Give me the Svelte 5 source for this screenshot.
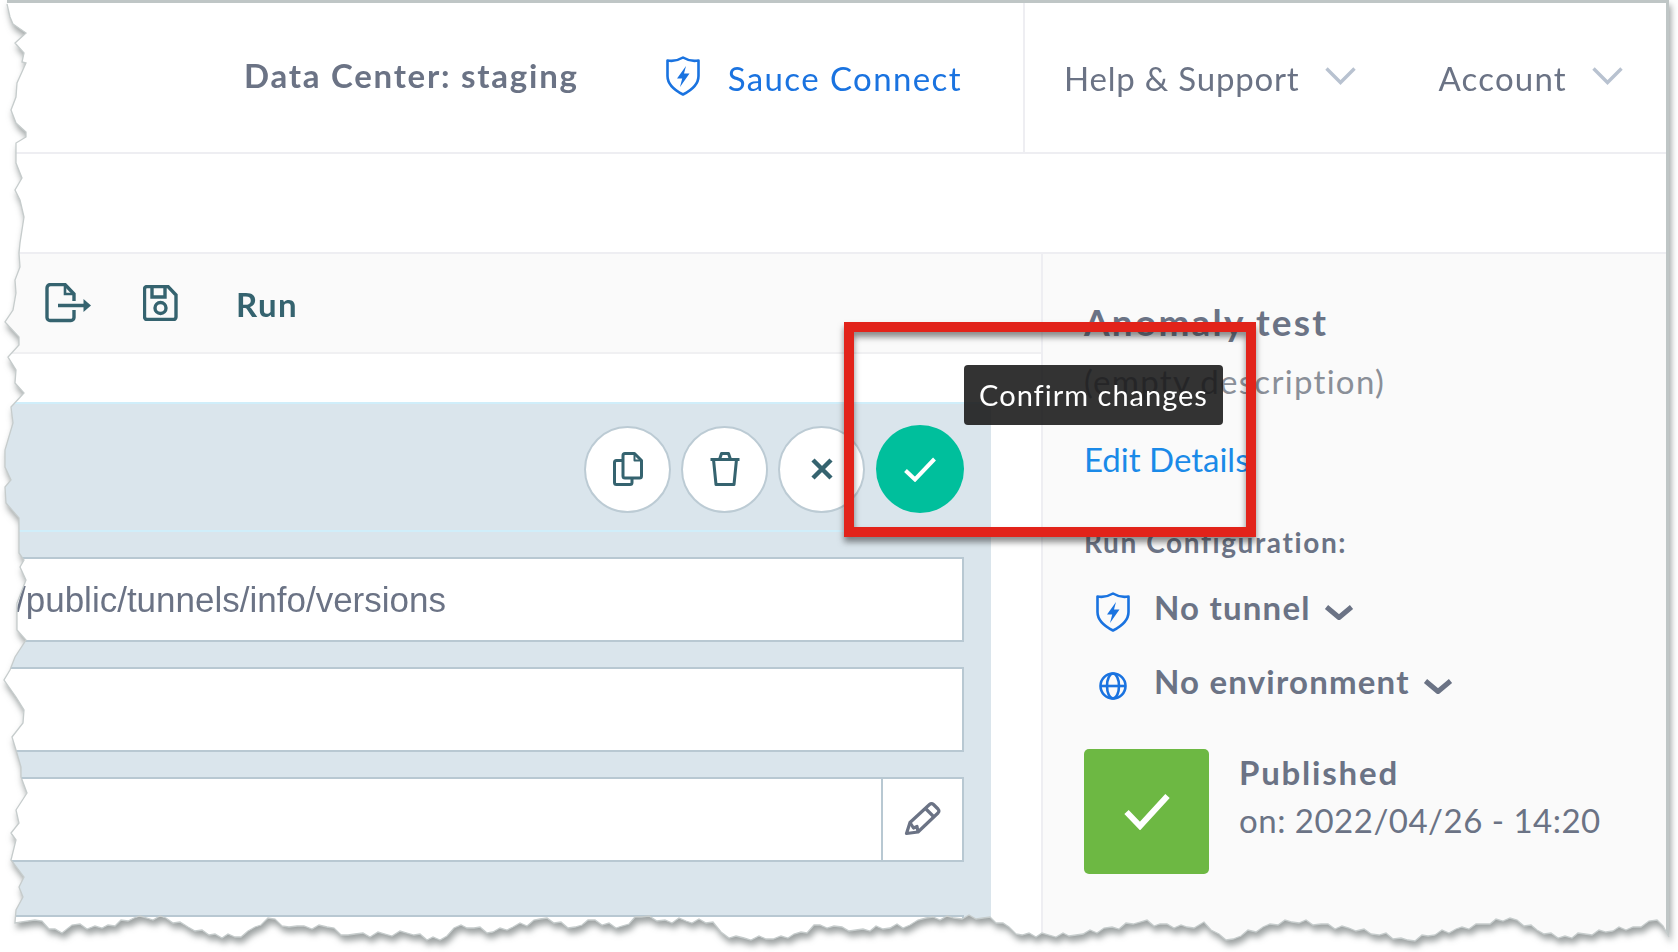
<script>
  // outline of the torn paper edge, traced from the reference
  const leftEdge = [[7,4],[10,17],[13,24],[26,33],[15,43],[24,53],[22,62],[26,63],[17,83],[16,97],[11,110],[16,123],[26,132],[26,137],[16,143],[16,163],[22,178],[15,190],[20,200],[24,217],[20,243],[19,253],[20,267],[15,280],[16,293],[13,310],[5,322],[19,337],[19,345],[8,357],[16,370],[15,383],[24,393],[11,407],[13,423],[5,450],[5,467],[11,480],[5,487],[6,503],[19,518],[19,553],[24,560],[20,567],[26,580],[17,603],[17,630],[26,640],[15,657],[10,670],[4,680],[16,697],[24,710],[23,723],[12,737],[16,750],[21,767],[21,777],[27,793],[16,810],[19,823],[11,833],[16,840],[11,860],[24,877],[19,887],[23,897],[16,910],[15,923]];
  const bottomEdge = [[35,920],[62,933],[72,925],[102,928],[134,918],[166,918],[209,935],[241,937],[268,918],[289,927],[327,927],[348,935],[407,933],[440,940],[461,925],[493,932],[547,918],[568,928],[595,920],[616,928],[641,917],[665,920],[713,922],[729,938],[788,938],[820,925],[856,930],[910,925],[926,918],[990,917],[1022,935],[1076,935],[1140,922],[1194,928],[1204,922],[1226,940],[1285,920],[1349,928],[1408,940],[1510,918],[1558,938],[1633,927],[1657,920],[1669,937]];

  // break long bottom segments into small teeth
  function roughen(points) {
    const out = [];
    for (let i = 0; i < points.length - 1; i++) {
      const [x0, y0] = points[i];
      const [x1, y1] = points[i + 1];
      const steps = Math.max(1, Math.round((x1 - x0) / 7));
      for (let s = 0; s < steps; s++) {
        const t = s / steps;
        const n = s === 0 ? 0 : Math.sin(x0 * 1.7 + s * 2.3) * 2.5;
        out.push([Math.round(x0 + (x1 - x0) * t), Math.round(y0 + (y1 - y0) * t + n)]);
      }
    }
    out.push(points[points.length - 1]);
    return out;
  }

  const edge = [...leftEdge, ...roughen(bottomEdge)];
  const clip = 'polygon(' + ['1669px 0', ...edge.slice().reverse().map(([x, y]) => `${x}px ${y}px`), '7px 0'].join(',') + ')';
  const outline = edge.map(([x, y]) => `${x},${y}`).join(' ');

  const actions = ['copy', 'trash', 'close'];
</script>

{#snippet shield(size)}
  <svg class="shield" width={size} height={size * 40 / 34} viewBox="0 0 34 40" fill="none">
    <path d="M17 1.500C12 4.500 6.500 5.500 1.500 4.500V20C1.500 29 10 35 17 38.500C24 35 32.500 29 32.500 20V4.500C27.500 5.500 22 4.500 17 1.500Z" stroke="#1a73e0" stroke-width="2.600" stroke-linejoin="round"/>
    <path d="M20 10L11 22.500H16.200L14 31L23.500 17.500H18Z" fill="#1a73e0"/>
  </svg>
{/snippet}

{#snippet caret()}
  <svg class="caret" width="30" height="17" viewBox="0 0 30 17" fill="none">
    <path d="M2.500 3L15 13.500L27.500 3" stroke="#6b7385" stroke-width="5" stroke-linejoin="round"/>
  </svg>
{/snippet}

{#snippet thin()}
  <svg class="thin" width="31" height="18" viewBox="0 0 31 18" fill="none">
    <path d="M1.500 1.500L15.500 15.500L29.500 1.500" stroke="#b8c2d0" stroke-width="3.400"/>
  </svg>
{/snippet}

<div class="sheet">
  <div class="paper" style="clip-path:{clip}">
    <header class="top">
      <span class="dc">Data Center: staging</span>
      <a class="connect" href="#top">{@render shield(34)}<span>Sauce Connect</span></a>
      <nav class="menus">
        <span class="menu help"><span>Help &amp; Support</span> {@render thin()}</span>
        <span class="menu acct"><span>Account</span> {@render thin()}</span>
      </nav>
    </header>
    <div class="strip"></div>

    <div class="work">
      <main class="main">
        <div class="toolbar">
          <svg width="46" height="40" viewBox="0 0 46 40" fill="none" stroke="#35636f" stroke-width="3.400">
            <path d="M29 27V34.500A3 3 0 0 1 26 37.500H5A3 3 0 0 1 2 34.500V5A3.500 3.500 0 0 1 5.500 1.500H20L29 11V18"/>
            <path d="M20 1.500V11H29" stroke-width="2.600"/>
            <path d="M13 22.500H40"/>
            <path d="M38.500 16L46 22.500L38.500 29Z" fill="#35636f" stroke="none"/>
          </svg>
          <svg class="save" width="35" height="36" viewBox="0 0 35 36" fill="none" stroke="#35636f" stroke-width="3.400">
            <path d="M4 1.500H25L33 10V32A2.500 2.500 0 0 1 30.500 34.500H4A2.500 2.500 0 0 1 1.500 32V4A2.500 2.500 0 0 1 4 1.500Z"/>
            <path d="M9 1.500V12H22V1.500"/>
            <circle cx="17.500" cy="23" r="5.500"/>
          </svg>
          <span class="run">Run</span>
        </div>
        <div class="gap"></div>

        <section class="editor">
          <div class="editbar">
            {#each actions as a}
              <button class="round" type="button" aria-label={a}>
                {#if a === 'copy'}
                  <svg width="30" height="34" viewBox="0 0 30 34" fill="none" stroke="#35636f" stroke-width="3" stroke-linejoin="round">
                    <path d="M12 1.500H21.500L28.500 8.500V24A2 2 0 0 1 26.500 26H12A2 2 0 0 1 10 24V3.500A2 2 0 0 1 12 1.500Z"/>
                    <path d="M21.500 1.500V8.500H28.500" stroke-width="2"/>
                    <path d="M10 8.500H3.500A2 2 0 0 0 1.500 10.500V30.500A2 2 0 0 0 3.500 32.500H17A2 2 0 0 0 19 30.500V26"/>
                  </svg>
                {:else if a === 'trash'}
                  <svg width="30" height="34" viewBox="0 0 30 34" fill="none" stroke="#35636f" stroke-width="3" stroke-linejoin="round">
                    <path d="M0.500 7.500H29.500"/>
                    <path d="M9.500 7.500L11.500 1.500H18.500L20.500 7.500"/>
                    <path d="M3.500 7.500L6 32.500H24L26.500 7.500"/>
                  </svg>
                {:else}
                  <svg width="22" height="22" viewBox="0 0 22 22" fill="none" stroke="#35636f" stroke-width="4.500">
                    <path d="M2 2L20 20M20 2L2 20"/>
                  </svg>
                {/if}
              </button>
            {/each}
            <button class="round ok" type="button" aria-label="confirm">
              <svg width="32" height="25" viewBox="0 0 32 25" fill="none" stroke="#fff" stroke-width="4">
                <path d="M1.500 13.500L11 22.500L30.500 2"/>
              </svg>
            </button>
          </div>

          <div class="field"><span class="value">/public/tunnels/info/versions</span></div>
          <div class="field"></div>
          <div class="field split">
            <div class="grow"></div>
            <div class="edit">
              <svg width="38" height="35" viewBox="0 0 38 35" fill="none" stroke="#6b7385" stroke-width="3.200" stroke-linejoin="round">
                <path d="M2.500 32.500L6 21.500L25.500 3.500A3 3 0 0 1 29.500 3.500L34 8A3 3 0 0 1 34 12L14 31Z"/>
                <path d="M21.500 7.500L30 16"/>
                <path d="M6 21.500L9.500 27L13 25.500L14 31"/>
              </svg>
            </div>
          </div>
          <div class="field last"></div>
        </section>
      </main>

      <aside class="side">
        <h2>Anomaly test</h2>
        <p class="desc">(empty description)</p>
        <a class="details" href="#top">Edit Details</a>
        <h3>Run Configuration:</h3>
        <div class="pick">
          <span class="pick-icon">{@render shield(34)}</span>
          <span class="pick-name">No tunnel</span>
          {@render caret()}
        </div>
        <div class="pick env">
          <span class="pick-icon">
            <svg width="28" height="28" viewBox="0 0 28 28" fill="none" stroke="#1a73e0" stroke-width="2.600">
              <circle cx="14" cy="14" r="12.500"/>
              <ellipse cx="14" cy="14" rx="6" ry="12.500"/>
              <path d="M1.500 14H26.500"/>
            </svg>
          </span>
          <span class="pick-name">No environment</span>
          {@render caret()}
        </div>
        <div class="status">
          <div class="badge">
            <svg width="46" height="36" viewBox="0 0 46 36" fill="none" stroke="#fff" stroke-width="6">
              <path d="M2.500 18L16 32L43.500 2"/>
            </svg>
          </div>
          <div class="status-text">
            <strong>Published</strong>
            <span>on: 2022/04/26 - 14:20</span>
          </div>
        </div>
      </aside>
    </div>

    <div class="tip">Confirm changes</div>
    <div class="callout"></div>
  </div>

  <svg class="edge" width="1678" height="952" viewBox="0 0 1678 952" fill="none">
    <polyline points={outline} stroke="#c6cccc" stroke-width="1.300"/>
  </svg>
</div>

<style>
  :global(body) { margin: 0; background: #fff; }

  .sheet {
    position: relative; width: 1678px; height: 952px; overflow: hidden;
    font-family: Lato, "Open Sans", sans-serif;
    color: #6b7385;
    filter: drop-shadow(2px 5px 3px rgba(60, 70, 70, 0.5));
  }
  .edge { position: absolute; left: 0; top: 0; pointer-events: none; }

  .paper {
    position: relative; box-sizing: border-box; width: 1669px; height: 945px;
    background: #fff; overflow: hidden;
    border-top: 3px solid #bfc6c6; border-right: 3px solid #bfc6c6;
  }

  .top {
    display: flex; align-items: center; height: 151px; box-sizing: border-box;
    border-bottom: 2px solid #eeeef2; padding-left: 244px;
  }
  .dc { font-size: 33px; font-weight: 700; color: #6b7385; margin-top: -6px; letter-spacing: 1.75px; }
  .connect {
    display: flex; align-items: center; margin-left: 87px; gap: 28px;
    font-size: 33px; letter-spacing: 1.4px; color: #1a73e0; text-decoration: none;
  }
  .connect .shield { margin-top: -4px; }
  .menus {
    display: flex; align-items: center; align-self: stretch;
    margin-left: 61px; padding-left: 39px; border-left: 2px solid #eeeef2;
  }
  .menu { display: flex; align-items: center; gap: 25px; font-size: 33px; font-weight: 400; letter-spacing: 0.8px; }
  .help { margin-right: 83px; }
  .acct { letter-spacing: 1.2px; }
  .thin { margin-top: -4px; }

  .strip { height: 98px; border-bottom: 2px solid #eeeef2; }

  .work { display: flex; height: 700px; }
  .main { width: 1041px; }

  .toolbar {
    display: flex; align-items: center; box-sizing: border-box; height: 100px;
    padding: 0 0 0 45px; background: #fafafa; border-bottom: 2px solid #f0f0f2;
  }
  .save { margin-left: 52px; }
  .run { margin-left: 58px; font-size: 33px; font-weight: 700; letter-spacing: 1.4px; color: #35636f; margin-top: 2px; }
  .gap { height: 48px; }

  .editor { width: 991px; height: 560px; background: #dae5ec; border-top: 2px solid #d0eefa; box-sizing: border-box; }
  .editbar {
    display: flex; align-items: center; justify-content: flex-end; gap: 10px;
    box-sizing: border-box; height: 128px; padding: 4px 27px 0 0;
    border-bottom: 2px solid #d0eefa; margin-bottom: 25px;
  }
  .round {
    display: flex; align-items: center; justify-content: center;
    width: 87px; height: 87px; padding: 0; border-radius: 50%;
    background: #fff; border: 2px solid #bccbd4;
  }
  .ok { width: 88px; height: 88px; margin-left: 1px; background: #00bf9c; border: none; }

  .field {
    display: flex; align-items: center; box-sizing: border-box;
    width: 964px; height: 85px; margin-bottom: 25px;
    background: #fff; border: 2px solid #b8c8d2; border-left: none;
  }
  .value {
    margin-left: 16px; font-family: "Liberation Sans", Arial, sans-serif;
    font-size: 35px; color: #6b7385;
  }
  .split .grow { flex: 1; align-self: stretch; }
  .edit {
    display: flex; align-items: center; justify-content: center;
    width: 79px; align-self: stretch; border-left: 2px solid #b8c8d2;
  }
  .edit svg { margin-top: -2px; }
  .last { margin-top: 53px; }

  .side {
    flex: 1; box-sizing: border-box; padding: 46px 0 0 41px;
    background: #fafafa; border-left: 2px solid #eeeef2;
  }
  h2 { margin: 0; font-size: 37px; line-height: 44px; font-weight: 700; letter-spacing: 2.2px; }
  .desc { margin: 17px 0 0; font-size: 33px; line-height: 40px; font-weight: 400; letter-spacing: 1.3px; color: #8a8f98; }
  .details { display: block; margin-top: 38px; font-size: 33px; line-height: 40px; color: #1a8ae8; text-decoration: none; }
  h3 { margin: 45px 0 0; font-size: 28px; line-height: 36px; font-weight: 700; letter-spacing: 1.6px; }

  .pick { display: flex; align-items: center; height: 50px; margin-top: 24px; padding-left: 12px; }
  .env { margin-top: 24px; }
  .pick-icon { display: flex; justify-content: center; width: 34px; margin-top: 6px; }
  .pick-name { margin-left: 24px; font-size: 33px; font-weight: 700; letter-spacing: 1.2px; margin-top: -4px; }
  .caret { margin: 6px 0 0 13px; }

  .status { display: flex; align-items: flex-start; margin-top: 41px; }
  .badge {
    display: flex; align-items: center; justify-content: center;
    width: 125px; height: 125px; border-radius: 5px; background: #6db843;
  }
  .status-text {
    display: flex; flex-direction: column; gap: 8px; margin-left: 30px; padding-top: 3px;
    font-size: 33px; line-height: 40px; letter-spacing: 0.5px;
  }
  .status-text strong { font-weight: 700; letter-spacing: 1.8px; }

  .tip {
    position: absolute; left: 964px; top: 362px; box-sizing: border-box;
    width: 259px; height: 60px; line-height: 60px; text-align: center;
    background: rgba(23, 23, 23, 0.88); border-radius: 4px;
    color: #fff; font-size: 29px; letter-spacing: 1px;
  }
  .callout {
    position: absolute; left: 844px; top: 319px; box-sizing: border-box;
    width: 412px; height: 215px; border: 10px solid #e2231a;
    filter: drop-shadow(0 5px 3px rgba(40, 40, 40, 0.55));
  }
</style>
